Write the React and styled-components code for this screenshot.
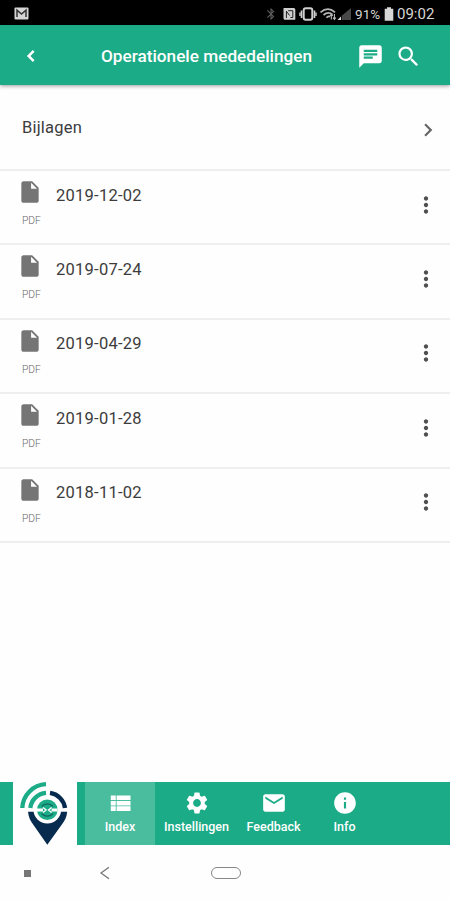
import React from "react";
import styled, { createGlobalStyle } from "styled-components";
import {
  MdBluetooth,
  MdChat,
  MdChevronRight,
  MdEmail,
  MdInfo,
  MdInsertDriveFile,
  MdMoreVert,
  MdSearch,
  MdSettings,
} from "react-icons/md";

// List icon with thin gaps between the cells
const IndexIcon = ({ size }) => (
  <svg width={size} height={size} viewBox="0 0 24 24" fill="currentColor">
    <path d="M3.5 14.3h4.6v-4.2H3.5zm0 5h4.6v-4.2H3.5zm0-10h4.6V5H3.5zm5.4 5h12.8v-4.2H8.9zm0 5h12.8v-4.2H8.9zM8.9 5v4.3h12.8V5z" />
  </svg>
);

const files = ["2019-12-02", "2019-07-24", "2019-04-29", "2019-01-28", "2018-11-02"];

const tabs = [
  { label: "Index", icon: IndexIcon, width: 70, active: true },
  { label: "Instellingen", icon: MdSettings, width: 83 },
  { label: "Feedback", icon: MdEmail, width: 71 },
  { label: "Info", icon: MdInfo, width: 71 },
];

const MailNotification = () => (
  <svg width="15" height="13" viewBox="0 0 15 13">
    <rect x="0.5" y="0.5" width="14" height="12" rx="1" fill="#d5d5d5" />
    <path d="M3 10V3.2L7.5 7L12 3.2V10" fill="none" stroke="#333" strokeWidth="1.5" />
  </svg>
);

// nfc, vibrate, wifi and signal strength
const StatusIcons = () => (
  <svg width="72" height="16" viewBox="0 0 72 16">
    <path d="M0.5 2h10.3a1.5 1.5 0 0 1 1.5 1.5v10.3H2a1.5 1.5 0 0 1-1.5-1.5z" fill="#cfcfcf" />
    <path d="M3.4 12V5.2L6.6 9.5M5.2 4.7h4.6v6.8H7.4" fill="none" stroke="#222" strokeWidth="1" />
    <rect x="20.7" y="2.2" width="8.6" height="11.6" rx="2" fill="none" stroke="#d0d0d0" strokeWidth="2" />
    <path d="M18.5 4.5v7.5M31.5 4.5v7.5" stroke="#d0d0d0" strokeWidth="1.6" />
    <path d="M17 6.5v3.5M33 6.5v3.5" stroke="#d0d0d0" strokeWidth="1.4" />
    <path d="M37.5 6.3Q45 0 52 6.3M40.5 9Q45 5.2 49.5 8.4M43.5 11.8Q45 9.8 47 10.8" fill="none" stroke="#b5b5b5" strokeWidth="1.7" />
    <path d="M48.3 13.5V8.5M46.8 10L48.3 8.2L49.8 10M51.4 8v5.3M50 11.7L51.4 13.4L52.8 11.7" fill="none" stroke="#bbb" strokeWidth="1.1" />
    <path d="M54.5 14h3.5v-3.5z" fill="#ddd" />
    <path d="M58.7 14V9.8L68 2v12z" fill="#484848" />
  </svg>
);

const Battery = () => (
  <svg width="10" height="14" viewBox="0 0 10 14">
    <path d="M3 0.3h4v1.5h2.3v11.9H0.7V1.8H3z" fill="#d8d8d8" />
  </svg>
);

const BackArrow = () => (
  <svg width="10" height="14" viewBox="0 0 10 14">
    <path d="M7.7 1.8L2.6 7L7.7 12.2" fill="none" stroke="currentColor" strokeWidth="2.5" />
  </svg>
);

const Logo = () => (
  <svg width="64" height="63" viewBox="13 782 64 63">
    <g fill="none" strokeWidth="4.3">
      <path d="M22.3 808A24.8 24.8 0 0 1 46 784.2" stroke="#1bab86" />
      <path d="M30.3 808A17 17 0 0 1 46 792.9" stroke="#1bab86" />
      <path d="M50 792.9A17.5 17.5 0 0 1 65 808" stroke="#062b4f" />
    </g>
    <path d="M28 811.7H67.2C66.8 817 64.5 821 61.5 825L47.3 844.8L33.5 825C30.5 821 28.5 817 28 811.7z" fill="#062b4f" />
    <circle cx="47.3" cy="809.8" r="13.8" fill="#fff" />
    <circle cx="47.3" cy="809.8" r="10.3" fill="#1bab86" />
    <path d="M37 810H43M51.6 810H57.6" stroke="#fff" strokeWidth="3" />
    <path d="M41.7 806.3Q47.3 801.5 52.9 806.3M41.7 813.7Q47.3 818.5 52.9 813.7" fill="none" stroke="#11635f" strokeWidth="1.3" />
    <path d="M43 807.5L46 810L43 812.5M51.6 807.5L48.6 810L51.6 812.5" fill="none" stroke="#fff" strokeWidth="1.5" />
  </svg>
);

const App = () => {
  return (
    <Screen>
      <GlobalStyle />
      <StatusBar>
        <MailNotification />
        <StatusRight>
          <MdBluetooth size={14} color="#5a5a5a" />
          <StatusIcons />
          <Percent>91%</Percent>
          <Battery />
          <Clock>09:02</Clock>
        </StatusRight>
      </StatusBar>

      <Header>
        <BackButton aria-label="Terug">
          <BackArrow />
        </BackButton>
        <Title>Operationele mededelingen</Title>
        <IconButton aria-label="Berichten">
          <MdChat size={27} />
        </IconButton>
        <IconButton aria-label="Zoeken">
          <MdSearch size={27} />
        </IconButton>
      </Header>

      <SectionRow>
        <SectionName>Bijlagen</SectionName>
        <MdChevronRight size={26} color="#666" />
      </SectionRow>

      <List>
        {files.map((name) => (
          <FileRow key={name}>
            <FileType>
              <MdInsertDriveFile size={26} color="#757575" />
              <TypeLabel>PDF</TypeLabel>
            </FileType>
            <FileName>{name}</FileName>
            <MdMoreVert size={26} color="#505050" />
          </FileRow>
        ))}
      </List>

      <TabBar>
        <LogoBox>
          <Logo />
        </LogoBox>
        {tabs.map(({ label, icon: Icon, width, active }) => (
          <Tab key={label} $width={width} $active={active}>
            <Icon size={26} />
            <TabLabel>{label}</TabLabel>
          </Tab>
        ))}
      </TabBar>

      <SystemBar>
        <Square />
        <svg width="12" height="14" viewBox="0 0 12 14">
          <path d="M10 1.2L2 7L10 12.8" fill="none" stroke="#777" strokeWidth="1.3" />
        </svg>
        <HomePill />
      </SystemBar>
    </Screen>
  );
};

export default App;

// Styled components
const GlobalStyle = createGlobalStyle`
  body {
    margin: 0;
    background: #fefefe;
  }
`;

const Screen = styled.div`
  display: flex;
  flex-direction: column;
  width: 450px;
  height: 900px;
  overflow: hidden;
  background: #fefefe;
  font-family: Roboto, "Liberation Sans", sans-serif;
`;

const StatusBar = styled.div`
  display: flex;
  align-items: center;
  justify-content: space-between;
  flex: none;
  box-sizing: border-box;
  height: 25px;
  padding: 2px 15px 0 14px;
  background: #000;
  color: #d6d6d6;
`;

const StatusRight = styled.div`
  display: flex;
  align-items: center;

  > svg:first-child {
    margin-right: 5px;
  }
`;

const Percent = styled.span`
  width: 29px;
  font-size: 13.5px;
  letter-spacing: 0.1px;
`;

const Clock = styled.span`
  width: 38px;
  margin-left: 3px;
  font-size: 15px;
  white-space: nowrap;
`;

const Header = styled.header`
  display: flex;
  align-items: center;
  flex: none;
  box-sizing: border-box;
  height: 60px;
  padding: 2px 23px 0 17px;
  background: #1bab86;
  color: #fff;
  box-shadow: 0 1px 4px rgba(0, 0, 0, 0.4);
`;

const IconButton = styled.button`
  display: flex;
  align-items: center;
  justify-content: center;
  width: 38px;
  height: 40px;
  padding: 0;
  border: none;
  background: none;
  color: inherit;
`;

const BackButton = styled(IconButton)`
  width: 27px;
`;

const Title = styled.h1`
  flex: 1;
  margin: 0 0 0 57px;
  font-size: 17.2px;
  font-weight: 500;
  line-height: 24px;
  white-space: nowrap;
`;

const SectionRow = styled.div`
  display: flex;
  align-items: center;
  justify-content: space-between;
  flex: none;
  box-sizing: border-box;
  height: 86px;
  padding: 8px 9px 2px 22px;
  border-bottom: 2px solid #eee;
`;

const SectionName = styled.span`
  padding-bottom: 6px;
  color: #3c3c3c;
  font-size: 16.5px;
  letter-spacing: 0.2px;
`;

const List = styled.div`
  flex: 1;
`;

const FileRow = styled.div`
  display: flex;
  box-sizing: border-box;
  height: 74.4px;
  padding: 8px 11px 0 17px;
  border-bottom: 2px solid #eee;

  > svg {
    margin-top: 12.5px;
  }
`;

const FileType = styled.div`
  display: flex;
  flex-direction: column;
  width: 39px;
`;

const TypeLabel = styled.span`
  margin: 9px 0 0 5px;
  color: #666;
  font-size: 10.3px;
  font-weight: 300;
  line-height: 14px;
`;

const FileName = styled.span`
  flex: 1;
  padding-top: 4.6px;
  color: #3c3c3c;
  font-size: 16.5px;
  line-height: 24px;
  letter-spacing: 0.25px;
`;

const TabBar = styled.nav`
  display: flex;
  flex: none;
  height: 63px;
  background: #1bab86;
  color: #fff;
`;

const LogoBox = styled.div`
  width: 64px;
  margin: 0 8px 0 13px;
  background: #fefefe;
`;

const Tab = styled.div`
  display: flex;
  flex-direction: column;
  align-items: center;
  box-sizing: border-box;
  width: ${({ $width }) => $width}px;
  padding-top: 8px;
  background: ${({ $active }) => ($active ? "#49bd9e" : "transparent")};
`;

const TabLabel = styled.span`
  margin-top: 3px;
  font-size: 12.5px;
  font-weight: 500;
  line-height: 16px;
  white-space: nowrap;
`;

const SystemBar = styled.div`
  display: flex;
  align-items: center;
  flex: none;
  height: 55px;
  padding: 1px 0 0 24px;
  box-sizing: border-box;

  svg {
    margin: 0 100px 0 68px;
  }
`;

const Square = styled.div`
  width: 7px;
  height: 7px;
  background: #777;
`;

const HomePill = styled.div`
  box-sizing: border-box;
  width: 30px;
  height: 12px;
  border: 1.5px solid #888;
  border-radius: 6px;
`;
